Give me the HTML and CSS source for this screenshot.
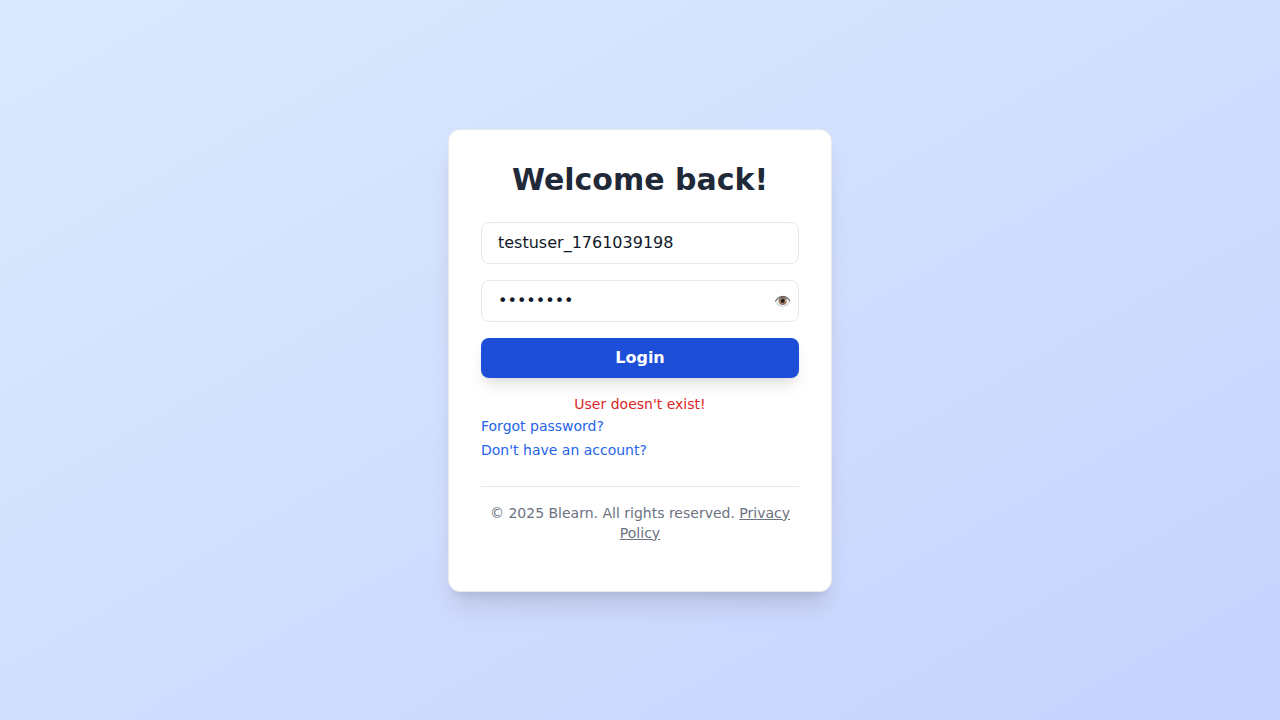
FILE: index.html
```html
<!DOCTYPE html>
<html lang="en">
<head>
<meta charset="utf-8">
<meta name="viewport" content="width=device-width, initial-scale=1">
<title>Blearn</title>
<link rel="stylesheet" href="styles.css">
</head>
<body>
<main class="card">
  <h1 class="title">Welcome back!</h1>
  <form class="form">
    <input class="field" type="text" aria-label="Username" value="testuser_1761039198">
    <div class="password">
      <input class="field" type="password" aria-label="Password" value="password">
      <button class="toggle" type="button" aria-label="Show password">👁️</button>
    </div>
    <button class="submit" type="submit">Login</button>
  </form>
  <p class="error" role="alert">User doesn't exist!</p>
  <nav class="links">
    <a class="link" href="#">Forgot password?</a>
    <a class="link" href="#">Don't have an account?</a>
  </nav>
  <footer class="footer">© 2025 Blearn. All rights reserved. <a class="policy" href="#">Privacy Policy</a></footer>
</main>
</body>
</html>
```
FILE: styles.css
```css
*, *::before, *::after { box-sizing: border-box; }

body {
  margin: 0;
  min-height: 100vh;
  display: flex;
  align-items: center;
  justify-content: center;
  background: linear-gradient(to bottom right, #dbeafe, #c7d2fe);
  font-family: "DejaVu Sans", sans-serif;
  font-size: 16px;
  line-height: 24px;
  color: #111827;
}

.card {
  width: 100%;
  max-width: 384px;
  padding: 32px 32px 48px;
  background: #fff;
  border: 1px solid #e5e7eb;
  border-radius: 12px;
  box-shadow: 0 20px 25px -5px rgb(0 0 0 / 0.1), 0 8px 10px -6px rgb(0 0 0 / 0.1);
}

.title {
  margin: 0 0 24px;
  font-size: 30px;
  line-height: 36px;
  font-weight: 700;
  text-align: center;
  color: #1f2937;
}

.form {
  display: flex;
  flex-direction: column;
  gap: 16px;
}

.field {
  display: block;
  width: 100%;
  padding: 8px 16px;
  border: 1px solid #e5e7eb;
  border-radius: 8px;
  background: #fff;
  font: inherit;
  color: inherit;
}

.password { position: relative; }

.toggle {
  position: absolute;
  top: 0;
  bottom: 0;
  right: 8px;
  padding: 0;
  border: 0;
  background: none;
  font: inherit;
  font-size: 14px;
  color: #6b7280;
}

.submit {
  padding: 8px 16px;
  border: 0;
  border-radius: 8px;
  background: #1d4ed8;
  color: #fff;
  font: inherit;
  font-weight: 600;
  box-shadow: 0 10px 15px -3px rgb(0 0 0 / 0.1), 0 4px 6px -4px rgb(0 0 0 / 0.1);
}

.error {
  margin: 16px 0 0;
  font-size: 14px;
  line-height: 20px;
  text-align: center;
  color: #dc2626;
}

.links {
  display: flex;
  flex-direction: column;
  align-items: flex-start;
}

.link {
  font-size: 14px;
  line-height: 24px;
  color: #2563eb;
  text-decoration: none;
}

.footer {
  margin-top: 24px;
  padding-top: 16px;
  border-top: 1px solid #e5e7eb;
  font-size: 14px;
  line-height: 20px;
  text-align: center;
  color: #6b7280;
}

.policy { color: inherit; }
```
